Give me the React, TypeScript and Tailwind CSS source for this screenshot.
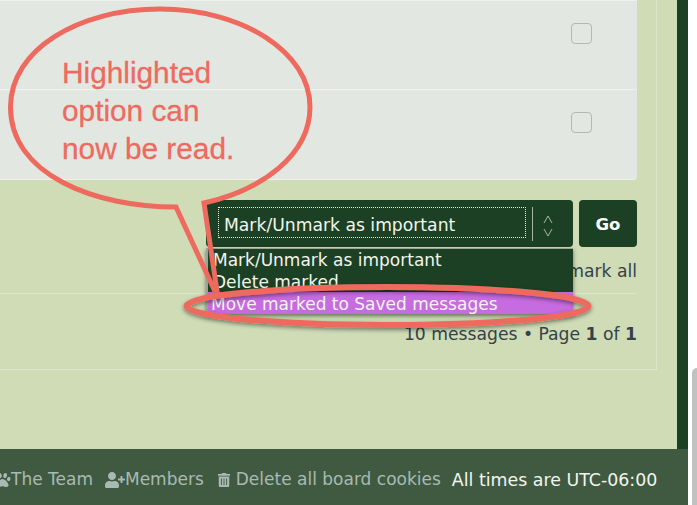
import React from 'react';
import { FaPaw, FaUserPlus, FaTrashAlt } from 'react-icons/fa';

const Row = ({ last }: { last?: boolean }) => (
  <div className={`h-[89px] pl-[571px] pt-[22px] ${last ? 'h-[90px]' : 'border-b border-[#eef1ec]'}`}>
    <div className="w-[21px] h-[21px] rounded-[4px] border border-[#b4b8b2]" />
  </div>
);

// speech bubble and the ring round the highlighted option
const Callout = () => (
  <svg className="absolute left-0 top-0 pointer-events-none" width="697" height="505" viewBox="0 0 697 505" fill="none">
    <defs>
      <filter id="ringShadow" x="-10%" y="-40%" width="120%" height="200%">
        <feDropShadow dx="0" dy="2" stdDeviation="2" floodColor="#000" floodOpacity="0.45" />
      </filter>
    </defs>
    <path
      d="M176 207 C95 207 10.500 175 10.500 107 C10.500 50 78 9 160 9 C242 9 310 52 310 107 C310 155 262 190 204 203 L218 298 Z"
      stroke="#ee6a5e"
      strokeWidth="5"
      strokeLinejoin="miter"
    />
    <ellipse cx="387.500" cy="306" rx="201" ry="19" stroke="#ee6a5e" strokeWidth="6" filter="url(#ringShadow)" />
  </svg>
);

export default function App() {
  return (
    <div className="relative w-[697px] h-[505px] overflow-hidden bg-white font-['DejaVu_Sans',sans-serif]">
      <div className="w-[688px] h-[505px] flex flex-col">
        <main className="h-[449px] bg-[#cfdcb6] border-r-[11px] border-[#1c4023]">
          <div className="w-[657px] h-[370px] border-r border-b border-[#dce5cc]">
            <div className="w-[637px] h-[180px] bg-[#e2e7e1] border-t border-b border-[#eef1ec] rounded-br-[4px]">
              <Row />
              <Row last />
            </div>
            <div className="relative w-[637px] h-[114px] border-b border-[#dce5cc]">
              <div className="absolute left-[206px] top-[20px] flex gap-[6px]">
                <div className="w-[367px] h-[47px] rounded-[4px] bg-[#1c4023] flex items-center pl-[12px] pr-[15px] text-[#f2f5ee] text-[17.2px]">
                  <div className="w-[308px] h-[31px] border border-dotted border-[#e8ece4] flex items-center pl-[5px] mt-[-3px] pt-[8px] whitespace-nowrap">
                    Mark/Unmark as important
                  </div>
                  <div className="ml-[6px] mt-[1px] h-[34px] border-l border-[#a9b5a6]" />
                  <svg className="ml-[10px] mt-[4px]" width="10" height="22" viewBox="0 0 10 22" fill="none" stroke="#a9b5a6" strokeWidth="1">
                    <path d="M1 8 L5 1 L9 8 M1 14 L5 21 L9 14" />
                  </svg>
                </div>
                <div className="w-[58px] h-[47px] rounded-[4px] bg-[#1c4023] text-white font-bold text-[16.500px] flex items-center justify-center pt-[3px]">
                  Go
                </div>
              </div>
              <div className="absolute right-0 top-[79px] text-[17.2px] leading-[24px] text-[#36414c]">mark all</div>
              <div className="absolute left-[206px] top-[68px] w-[367px] h-[66px] overflow-hidden bg-[#1c4023] border-l-2 border-t border-[#9aa396] text-[#f2f5ee] text-[17px] leading-[21px] shadow-[0_2px_4px_rgba(0,0,0,0.5)]">
                <div className="h-[23px] whitespace-nowrap pl-[5px] pt-[1px]">Mark/Unmark as important</div>
                <div className="h-[20px] whitespace-nowrap pl-[5px] overflow-hidden">Delete marked</div>
                <div className="h-[22px] whitespace-nowrap pl-[3px] pt-[2px] bg-[#c76be0]">Move marked to Saved messages</div>
              </div>
            </div>
            <div className="w-[637px] pt-[28px] text-right text-[17.2px] leading-[24px] text-[#36414c]">
              10 messages • Page <b>1</b> of <b>1</b>
            </div>
          </div>
        </main>
        <footer className="h-[56px] bg-[#3f5a40] flex items-center whitespace-nowrap text-[17px] text-[#a8bab3] pt-[6px]">
          <FaPaw className="ml-[-6px] w-[17px] h-[16px]" />
          <span>The Team</span>
          <FaUserPlus className="ml-[12px] w-[20px] h-[16px]" />
          <span>Members</span>
          <FaTrashAlt className="ml-[13px] mr-[5px] w-[14px] h-[14px]" />
          <span>Delete all board cookies</span>
          <span className="ml-[11px] text-[17.400px] text-[#f2f5ee]">All times are UTC-06:00</span>
        </footer>
      </div>
      <div className="absolute left-[692px] top-[368px] w-[10px] h-[150px] rounded-[5px] bg-[#c1c1c1]" />
      <div className="absolute left-[62px] top-[54px] text-[29.800px] leading-[38px] font-['Liberation_Sans',sans-serif] text-[#ee6a5e] [-webkit-text-stroke:0.3px_#ee6a5e]">
        Highlighted
        <br />
        option can
        <br />
        now be read.
      </div>
      <Callout />
    </div>
  );
}
